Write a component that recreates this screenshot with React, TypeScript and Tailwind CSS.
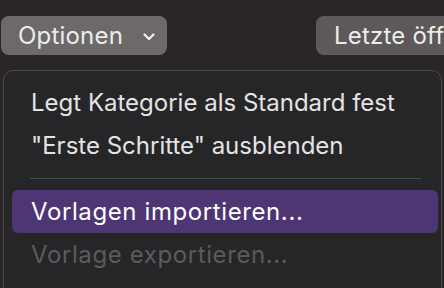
import React from 'react';

const items = [
  { label: 'Legt Kategorie als Standard fest' },
  { label: '"Erste Schritte" ausblenden' },
];

const App: React.FC = () => {
  return (
    <div
      className="w-[444px] h-[288px] overflow-hidden bg-[#2a2628] text-[24px] leading-none"
      style={{ fontFamily: 'Inter, "Open Sans", sans-serif' }}
    >
      {/* top bar */}
      <div className="flex items-center pt-[16px] pl-[1px]">
        <button className="flex shrink-0 items-center h-[39px] w-[166px] rounded-[8px] bg-[#6d696b] pl-[17px] text-[#ececec] tracking-[0.2px]">
          <span>Optionen</span>
          <svg width="12" height="8" viewBox="0 0 12 8" className="ml-[20px] mt-[2px]">
            <path d="M1.5 1.5 L6 6 L10.5 1.5" fill="none" stroke="#f0f0f0" strokeWidth="2.2" strokeLinecap="round" strokeLinejoin="round" />
          </svg>
        </button>
        <button className="ml-[149px] flex items-center h-[39px] w-[160px] shrink-0 rounded-[8px] bg-[#5d595b] pl-[18px] text-[#ececec] whitespace-nowrap tracking-[0.2px]">
          Letzte öffnen
        </button>
      </div>

      {/* dropdown menu */}
      <div className="mt-[15px] ml-[3px] w-[439px] h-[240px] rounded-[10px] border border-[#4c4b4d] bg-[#262527] pt-[10px] pl-[8px] pr-[3px]">
        {items.map(item => (
          <div key={item.label} className="flex items-center h-[43px] pl-[19px] text-[#e4e4e4] whitespace-nowrap">
            {item.label}
          </div>
        ))}
        <div className="flex items-center h-[23px] pl-[18px] pr-[17px]">
          <div className="h-px w-full bg-[#4a494b]" />
        </div>
        <div className="flex items-center h-[43px] rounded-[6px] bg-[#4e3574] pl-[19px] text-white whitespace-nowrap tracking-[0.6px]">
          Vorlagen importieren...
        </div>
        <div className="flex items-center h-[43px] pl-[19px] text-[#5c5b5d] whitespace-nowrap tracking-[0.6px]">
          Vorlage exportieren...
        </div>
      </div>
    </div>
  );
};

export default App;
